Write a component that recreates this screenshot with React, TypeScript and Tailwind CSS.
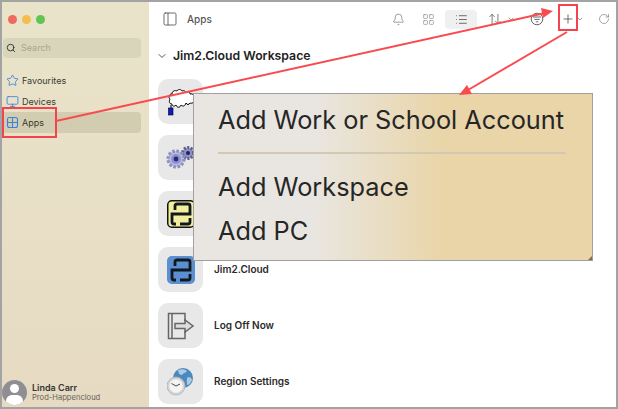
import { Bell, ChevronDown, LayoutGrid, List, PanelLeft, Plus, RotateCw, Search, Star, Monitor, ArrowUpDown } from "lucide-react";
import type { ReactNode } from "react";

function CloudIcon() {
  return (
    <svg width="30" height="28" viewBox="0 0 30 28" fill="none">
      <path d="M4 11c-2-2-1-5 2-5 0-3 3-4 5-3 1-2 4-2 5 0 2-1 3 0 4 2 2-2 4-1 4 1 3-1 5 2 4 5 1 3-2 5-4 4-1 2-3 2-4 0-1 3-3 4-5 2-1 3-4 3-5 0-2 2-4 1-4-1-3 0-3-3-2-5z" fill="#fff" stroke="#000" strokeWidth="1" />
      <path d="M5 17v3" stroke="#000" strokeWidth="1" />
      <rect x="2.5" y="20" width="4.5" height="7" fill="#0a1ccf" stroke="#000" strokeWidth="0.6" />
    </svg>
  );
}

function GearsIcon() {
  return (
    <svg width="32" height="26" viewBox="0 0 32 26" fill="none">
      <circle cx="23" cy="8" r="5.5" fill="#8d90cc" stroke="#5f6188" strokeWidth="3" strokeDasharray="2 1.5" />
      <circle cx="23" cy="8" r="2" fill="#23234a" />
      <circle cx="11" cy="14" r="8" fill="#b9bbe8" stroke="#8f91b8" strokeWidth="3.2" strokeDasharray="2.6 1.6" />
      <circle cx="11" cy="14" r="5" fill="#8c8fd6" />
      <circle cx="11" cy="14" r="2.4" fill="#2c2c55" />
    </svg>
  );
}

function JimLogo({ bg, frame }: { bg: string; frame: string }) {
  return (
    <svg width="28" height="28" viewBox="0 0 28 28" fill="none">
      <rect x="0.75" y="0.75" width="26.5" height="26.5" rx="4" fill={bg} stroke={frame} strokeWidth="1.5" />
      <path d="M8 10V6q0-2 2-2h11q2 0 2 2v8H5v8q0 2 2 2h2" stroke="#101820" strokeWidth="2.8" />
      <path d="M23 18v4q0 2-2 2h-8" stroke="#101820" strokeWidth="2.8" />
    </svg>
  );
}

function LogOffIcon() {
  return (
    <svg width="28" height="28" viewBox="0 0 28 28" fill="none" stroke="#666" strokeWidth="1.5">
      <path d="M18 9V1.5H1.5v25H18V19" />
      <path d="M5 2v24" />
      <path d="M8 11.5h10V8l8 6-8 6v-3.5H8z" fill="#ddd" />
    </svg>
  );
}

function RegionIcon() {
  return (
    <svg width="28" height="28" viewBox="0 0 28 28" fill="none">
      <circle cx="16" cy="10" r="10" fill="#4a88bd" />
      <path d="M11 2c3-1 7-1 9 1-1 2-4 2-5 4-2 0-4-2-4-5zM21 9c2 0 4 1 4 3-1 3-3 5-5 5 0-3-1-6 1-8z" fill="#a9cbe4" />
      <circle cx="9" cy="18" r="9" fill="#d4d4d4" stroke="#b0b0b0" strokeWidth="0.8" />
      <circle cx="9" cy="18" r="6.8" fill="#f4f4f4" />
      <path d="M4.5 15.5L9 18l4-2" stroke="#333" strokeWidth="0.9" />
    </svg>
  );
}

function AppsGlyph() {
  return (
    <svg width="13" height="13" viewBox="0 0 13 13" fill="none" stroke="#3b82e0" strokeWidth="1.1">
      <rect x="1.5" y="1.5" width="10" height="10" rx="2" />
      <path d="M6.5 1.5v10M1.5 6.5h10" />
    </svg>
  );
}

function AppRow({ icon, label }: { icon: ReactNode; label: string }) {
  return (
    <div className="flex items-center gap-[11px]">
      <div className="flex h-[45px] w-[45px] items-center justify-center rounded-[10px] bg-[#e8e8e8]">{icon}</div>
      <span className="text-[10px] font-semibold text-[#2a2a2a]">{label}</span>
    </div>
  );
}

function SideItem({ icon, label, active }: { icon: ReactNode; label: string; active?: boolean }) {
  return (
    <div className={`flex h-[21px] items-center gap-[3px] rounded-[4px] pl-1 text-[9px] text-[#3b3a32] ${active ? "bg-[#d2cdb0]" : ""}`}>
      {icon}
      <span>{label}</span>
    </div>
  );
}

export default function App() {
  return (
    <div className="relative h-[409px] w-[618px] overflow-hidden border-2 border-[#a3a3a3] bg-white font-['Inter',sans-serif]">
      <div className="flex h-full">
        {/* sidebar */}
        <aside className="flex h-full w-[147px] flex-col bg-gradient-to-b from-[#e9e4c9] to-[#e6dac2]">
          <div className="flex gap-[5px] pl-[6px] pt-[13px]">
            <span className="h-[9px] w-[9px] rounded-full bg-[#ee6a5f]" />
            <span className="h-[9px] w-[9px] rounded-full bg-[#f5bd4f]" />
            <span className="h-[9px] w-[9px] rounded-full bg-[#61c554]" />
          </div>
          <div className="ml-[1px] mt-[14px] flex h-[20px] w-[138px] items-center gap-[5px] rounded-[4px] bg-[#d9d5ba] pl-[3px] text-[9px] text-[#a9a68f]">
            <Search size={10} strokeWidth={2.2} className="text-[#333]" />
            <span>Search</span>
          </div>
          <div className="mt-[12px] flex w-[139px] flex-col">
            <SideItem icon={<Star size={13} strokeWidth={1.6} className="text-[#3b82e0]" />} label="Favourites" />
            <SideItem icon={<Monitor size={13} strokeWidth={1.6} className="text-[#3b82e0]" />} label="Devices" />
            <SideItem active icon={<AppsGlyph />} label="Apps" />
          </div>
          <div className="mt-auto flex items-center gap-[5px] pb-[2px]">
            <div className="relative h-[25px] w-[25px] overflow-hidden rounded-full bg-[#8e8e93]">
              <span className="absolute left-[8px] top-[4px] h-[9px] w-[9px] rounded-full bg-white" />
              <span className="absolute left-[4px] top-[15px] h-[12px] w-[17px] rounded-full bg-white" />
            </div>
            <div className="flex flex-col leading-[10px]">
              <span className="text-[9px] font-semibold text-[#333]">Linda Carr</span>
              <span className="text-[7.6px] text-[#66645a]">Prod-Happencloud</span>
            </div>
          </div>
        </aside>
        {/* main */}
        <main className="flex min-w-0 flex-1 flex-col">
          <header className="flex h-[34px] items-center pl-[13px] text-[#555]">
            <PanelLeft size={16} strokeWidth={1.3} />
            <span className="ml-[9px] text-[10px] font-medium">Apps</span>
            <div className="ml-auto flex items-center pr-[6px]">
              <Bell size={13} strokeWidth={1.3} className="mr-[17px] text-[#777]" />
              <LayoutGrid size={13} strokeWidth={1.2} className="mr-[10px] text-[#888]" />
              <div className="mr-[11px] flex h-[19px] w-[32px] items-center justify-center rounded-[4px] bg-[#f0f0f0]">
                <List size={13} strokeWidth={1.4} className="text-[#444]" />
              </div>
              <ArrowUpDown size={14} strokeWidth={1.3} className="text-[#555]" />
              <ChevronDown size={8} className="ml-[5px] mr-[15px] text-[#777]" />
              <svg width="14" height="14" viewBox="0 0 14 14" fill="none" stroke="#666" strokeWidth="1" className="mr-[17px]">
                <circle cx="7" cy="7" r="5.8" />
                <path d="M3 5h8M4.4 7.4h5.2M5.8 9.8h2.4" />
              </svg>
              <Plus size={14} strokeWidth={1.3} className="text-[#444]" />
              <ChevronDown size={8} className="ml-[1px] mr-[14px] text-[#666]" />
              <RotateCw size={12} strokeWidth={1.3} className="text-[#777]" />
            </div>
          </header>
          <div className="flex items-center gap-[5px] pl-[7px] pt-[11px]">
            <ChevronDown size={12} className="text-[#555]" />
            <span className="text-[12.25px] font-semibold text-[#222]">Jim2.Cloud Workspace</span>
          </div>
          <div className="mt-[14px] flex flex-col gap-[11px] pl-[9px]">
            <AppRow icon={<CloudIcon />} label="" />
            <AppRow icon={<GearsIcon />} label="" />
            <AppRow icon={<JimLogo bg="#f2ee9c" frame="#111" />} label="" />
            <AppRow icon={<JimLogo bg="#5b8fd0" frame="#5b8fd0" />} label="Jim2.Cloud" />
            <AppRow icon={<LogOffIcon />} label="Log Off Now" />
            <AppRow icon={<RegionIcon />} label="Region Settings" />
          </div>
        </main>
      </div>

      {/* popup over the list */}
      <div className="absolute left-[191px] top-[91px] flex h-[168px] w-[400px] flex-col whitespace-nowrap border border-[#a0a0a0] bg-gradient-to-r from-[#e9e6e1] from-[30%] to-[#e9d5a8] to-[62%] pl-[24px] pr-[26px] text-[25.3px] leading-[36px] text-[#262626]">
        <div className="pt-[8px]">Add Work or School Account</div>
        <div className="mt-[14px] h-[2px] bg-[#d2c9b2]" />
        <div className="pt-[15px]">Add Workspace</div>
        <div className="pt-[8px]">Add PC</div>
        <span className="absolute bottom-0 right-0 h-0 w-0 border-b-[4px] border-l-[4px] border-b-[#8a6a45] border-l-transparent" />
      </div>

      {/* callouts drawn on top of the screenshot */}
      <svg className="absolute -left-[2px] -top-[2px]" width="618" height="409" fill="none">
        <rect x="3" y="108" width="53" height="29" stroke="#f4434c" strokeWidth="2" />
        <rect x="559" y="5" width="18" height="25" stroke="#f4434c" strokeWidth="2" />
        <path d="M56 121L545 13" stroke="#f94a50" strokeWidth="2" />
        <path d="M553 11L541 8l2 10z" fill="#f94a50" />
        <path d="M567 32L468 90" stroke="#f94a50" strokeWidth="2" />
        <path d="M459 95l8-10 5 9z" fill="#f94a50" />
      </svg>
    </div>
  );
}
